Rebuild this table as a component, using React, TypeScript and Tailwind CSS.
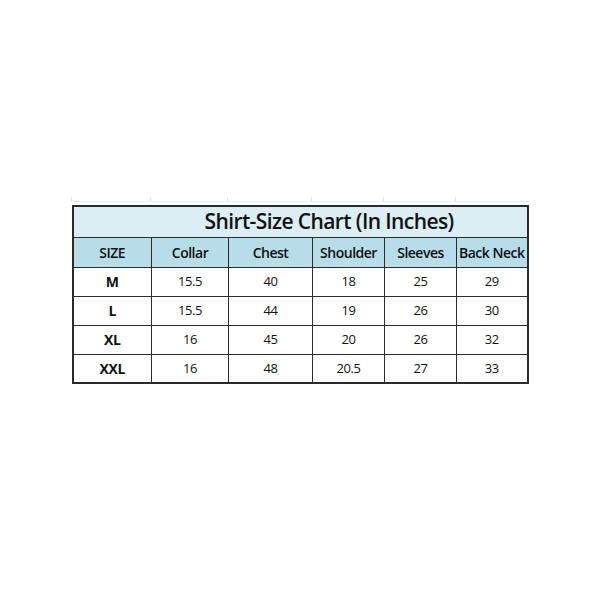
const cols = [
  { label: 'SIZE', w: 79 },
  { label: 'Collar', w: 77 },
  { label: 'Chest', w: 84 },
  { label: 'Shoulder', w: 72 },
  { label: 'Sleeves', w: 72 },
  { label: 'Back Neck', w: 71 }
]

const rows = [
  ['M', '15.5', '40', '18', '25', '29'],
  ['L', '15.5', '44', '19', '26', '30'],
  ['XL', '16', '45', '20', '26', '32'],
  ['XXL', '16', '48', '20.5', '27', '33']
]

const App = () => {
  return (
    <div className="w-[600px] h-[600px] bg-white flex flex-col items-center pt-[197px] font-['Open_Sans',sans-serif] text-[#111]">
      {/* faint sheet gridlines above the table */}
      <div className="flex h-[5px] w-[458px] border-b border-[#ececec] mb-[3px]">
        {cols.map((c) => (
          <div key={c.label} className="border-l border-[#e2e2e2] shrink-0" style={{ width: c.w }} />
        ))}
      </div>
      <table className="border-collapse border-2 border-[#2a2a2a] table-fixed h-fit">
        <colgroup>
          {cols.map((c) => (
            <col key={c.label} style={{ width: c.w }} />
          ))}
        </colgroup>
        <tbody>
          <tr className="h-[31px] bg-[#daeef3]">
            <td colSpan={6} className="border border-[#2a2a2a] p-0">
              <div className="pl-[131px] text-[21px] font-semibold tracking-[-0.6px] leading-none">
                Shirt-Size Chart (In Inches)
              </div>
            </td>
          </tr>
          <tr className="h-[30px] bg-[#b7dee8]">
            {cols.map((c) => (
              <th
                key={c.label}
                className="border border-[#2a2a2a] p-0 text-center text-[14px] font-semibold tracking-[-0.5px] whitespace-nowrap"
              >
                {c.label}
              </th>
            ))}
          </tr>
          {rows.map((r) => (
            <tr key={r[0]} className="h-[29px]">
              {r.map((v, i) => (
                <td
                  key={i}
                  className={
                    i === 0
                      ? 'border border-[#2a2a2a] p-0 text-center text-[14px] font-bold tracking-[-0.4px]'
                      : 'border border-[#2a2a2a] p-0 text-center text-[13px] tracking-[-0.4px]'
                  }
                >
                  {v}
                </td>
              ))}
            </tr>
          ))}
        </tbody>
      </table>
    </div>
  )
}

export default App
